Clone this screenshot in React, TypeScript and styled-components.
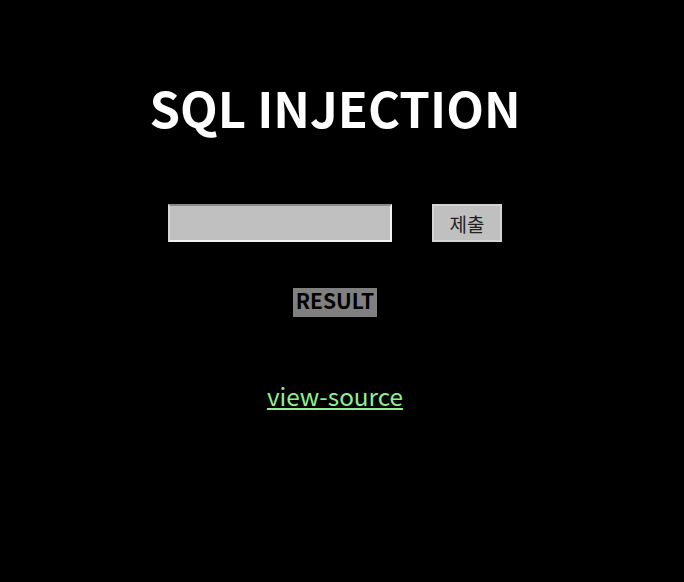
import React from "react";
import styled, { createGlobalStyle } from "styled-components";

const Global = createGlobalStyle`
  html, body { margin: 0; padding: 0; background: #000; }
  body { font-family: "Noto Sans CJK KR", "Noto Sans", sans-serif; min-height: 582px; }
`;

const Page = styled.main`
  display: flex;
  flex-direction: column;
  align-items: center;
  padding-top: 83px;
  padding-right: 14px;
`;

const Title = styled.h1`
  margin: 0;
  font-size: 49px;
  line-height: 48px;
  font-weight: 700;
  color: #fff;
`;

const Form = styled.form`
  display: flex;
  gap: 40px;
  margin-top: 73px;
`;

const Input = styled.input`
  box-sizing: border-box;
  width: 224px;
  height: 38px;
  background: #c0c0c0;
  border-style: solid;
  border-width: 2px;
  border-color: #8a8a8a #f2f2f2 #f2f2f2 #d6d6d6;
  outline: none;
  padding: 0 4px;
`;

const Submit = styled.button`
  box-sizing: border-box;
  width: 70px;
  height: 38px;
  background: #c0c0c0;
  border: 2px solid #d4d4d4;
  font-family: "Noto Sans CJK KR", sans-serif;
  font-size: 19px;
  color: #222;
  padding: 0;
`;

const Result = styled.div`
  margin-top: 46px;
  background: #808080;
  color: #000;
  font-weight: 700;
  font-size: 21px;
  line-height: 24px;
  padding: 0 3px 5px;
`;

const Link = styled.a`
  margin-top: 64px;
  color: #90ee90;
  font-size: 24.3px;
  line-height: 30px;
  text-decoration: underline;
`;

export default function App() {
  return (
    <>
      <Global />
      <Page>
        <Title>SQL INJECTION</Title>
        <Form onSubmit={(e) => e.preventDefault()}>
          <Input type="text" />
          <Submit type="submit">제출</Submit>
        </Form>
        <Result>RESULT</Result>
        <Link href="#">view-source</Link>
      </Page>
    </>
  );
}
